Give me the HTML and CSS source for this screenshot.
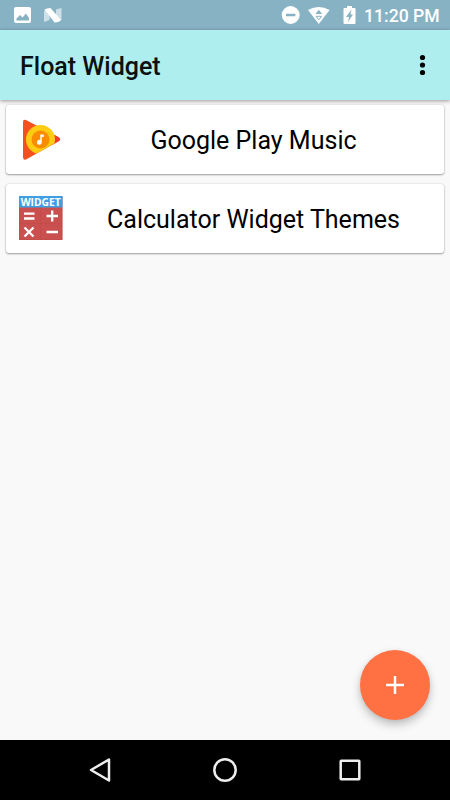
FILE: index.html
```html
<!DOCTYPE html>
<html lang="en">
<head>
<meta charset="utf-8">
<title>Float Widget</title>
<link rel="stylesheet" href="styles.css">
</head>
<body>
<div class="screen">
  <div class="status">
    <svg class="status-left" width="70" height="30" viewBox="0 0 70 30">
      <rect x="14" y="7" width="17" height="16" rx="2" fill="#fff"/>
      <path d="M16.500 20.500v-2l3.500-3.500 2.500 2.500 3.500-4 3 4.500v2.500z" fill="#86b2c4"/>
      <path d="M44 11l5.500-2v11L44 22zM56 9.500l5.500-1.500v12l-5.500 2z" fill="#fff" opacity=".6"/>
      <path d="M44.500 9.500q2-1.500 6-1.500l10.500 12q-2 2.500-6.500 2.500z" fill="#fff"/>
    </svg>
    <svg width="82" height="30" viewBox="278 0 82 30">
      <path fill="#fff" fill-rule="evenodd" d="M281.700 15a9 9 0 1 0 18 0a9 9 0 1 0-18 0zM286 13.800h9.400v2.400H286z"/>
      <path d="M308 10Q318.800 4 329.600 10L318.800 24z" fill="#fff"/>
      <path d="M315.500 14l3.300-4.200 3.300 4.200z" fill="#86b2c4"/>
      <path d="M316 16.300h5.600l-2.800 3.500z" fill="#fff" stroke="#86b2c4" stroke-width="1"/>
      <path d="M347 6h5v2h2.500q1 0 1 1v14q0 1-1 1h-10q-1 0-1-1V9q0-1 1-1h2.500z" fill="#fff"/>
      <path d="M351.500 9.500l-5.500 7.500h3l-1 5 5-7.500H350.500z" fill="#86b2c4"/>
    </svg>
    <span class="time">11:20 PM</span>
  </div>
  <header class="appbar">
    <h1>Float Widget</h1>
    <svg width="8" height="24" viewBox="0 0 8 24"><circle cx="4.500" cy="4.500" r="2.600"/><circle cx="4.500" cy="12" r="2.600"/><circle cx="4.500" cy="19.500" r="2.600"/></svg>
  </header>
  <main class="list">
    <div class="card">
      <svg width="44" height="44" viewBox="0 0 44 44">
        <defs><clipPath id="under"><path d="M0 0h44v20.500L6 42H0z"/></clipPath></defs>
        <path d="M4 4Q4 1 7 2L40 19.500Q42 21.500 40 23L7 41.500Q4 42.500 4 39z" fill="#f4511e"/>
        <path d="M32 15l8 4.500Q42 21.500 40 23l-7 4z" fill="#f43b2f"/>
        <g clip-path="url(#under)">
          <circle cx="21.500" cy="21.500" r="14.500" fill="#fdcc13"/>
          <circle cx="21.500" cy="21.500" r="9" fill="#fb8c00"/>
        </g>
        <path d="M21.300 16.500h3.500v2.600h-2v5.200a2.400 2.400 0 1 1-1.500-2.200z" fill="#fff"/>
      </svg>
      <span class="label">Google Play Music</span>
    </div>
    <div class="card">
      <svg class="calc-icon" width="44" height="44" viewBox="0 0 44 44">
        <path d="M0 0h43.500v44H0z" fill="#c9504e"/>
        <path d="M0 0h43.500v11.500H0z" fill="#3f9fe5"/>
        <path d="M0 27.500h43M21.500 11.500v32M.5 11.500v32M43 11.500v32M0 43.500h43" stroke="#b94643" stroke-opacity=".35" fill="none"/>
        <text class="widget-word" x="21.700" y="10" text-anchor="middle" textLength="40" lengthAdjust="spacingAndGlyphs">WIDGET</text>
        <path d="M5 17.700h10.500M5 22.500h10.500M27.500 20h11.500M33.200 14.500v11M5.500 31.500l9 9M14.500 31.500l-9 9M27.500 36h11.500" stroke="#fff" stroke-width="2.300" fill="none"/>
      </svg>
      <span class="label">Calculator Widget Themes</span>
    </div>
  </main>
  <button class="fab" aria-label="Add"><svg width="20" height="20" viewBox="0 0 20 20"><path d="M1 10h18M10 1v18" stroke="#fff" stroke-width="2.500"/></svg></button>
  <nav class="navbar">
    <svg width="26" height="26" viewBox="0 0 26 26"><path d="M22 2.500v21L4 13z"/></svg>
    <svg width="26" height="26" viewBox="0 0 26 26"><circle cx="13" cy="13" r="10.700"/></svg>
    <svg width="26" height="26" viewBox="0 0 26 26"><rect x="3.700" y="3.700" width="18.600" height="18.600" rx=".5"/></svg>
  </nav>
</div>
</body>
</html>
```
FILE: styles.css
```css
* { box-sizing: border-box; }
body { margin: 0; font-family: Roboto, "Liberation Sans", sans-serif; }
svg { display: block; flex: none; }
.screen {
  position: relative;
  display: flex;
  flex-direction: column;
  width: 450px;
  height: 800px;
  overflow: hidden;
  background: #f9f9f9;
}
.status {
  display: flex;
  align-items: center;
  height: 30px;
  flex: none;
  background: #86b2c4;
}
.status-left { margin-right: auto; }
.time {
  width: 86px;
  margin-left: 4px;
  font-size: 17.600px;
  font-weight: 500;
  line-height: 30px;
  padding-top: 1px;
  color: #fff;
  white-space: nowrap;
}
.appbar {
  display: flex;
  align-items: center;
  justify-content: space-between;
  height: 70px;
  flex: none;
  padding: 0 24px 0 20px;
  background: #afeeee;
  box-shadow: 0 1px 4px rgba(0, 0, 0, .4);
}
.appbar h1 {
  margin: 3px 0 0;
  font-size: 25px;
  font-weight: 500;
  line-height: 32px;
  color: #0b1010;
}
.list {
  display: flex;
  flex-direction: column;
  flex: 1;
  gap: 9.500px;
  padding: 5px 6px;
}
.card {
  display: flex;
  align-items: center;
  height: 69px;
  padding-left: 13px;
  background: #fff;
  border-radius: 3px;
  box-shadow: 0 1px 2px rgba(0, 0, 0, .35), 0 0 2px rgba(0, 0, 0, .15);
}
.calc-icon { margin-top: -1px; }
.label {
  flex: 1;
  padding: 3px 0 0;
  font-size: 25px;
  line-height: 32px;
  text-align: center;
  color: #000;
}
.widget-word { font: 700 10.500px "Open Sans", sans-serif; fill: #fff; }
.fab {
  position: absolute;
  left: 360px;
  top: 650px;
  display: flex;
  align-items: center;
  justify-content: center;
  width: 70px;
  height: 70px;
  padding: 0;
  border: 0;
  border-radius: 50%;
  background: #ff7043;
  box-shadow: 0 5px 10px rgba(0, 0, 0, .22), 0 1px 4px rgba(0, 0, 0, .08);
}
.navbar {
  display: flex;
  align-items: center;
  justify-content: space-between;
  height: 60px;
  flex: none;
  padding: 0 87px;
  background: #000;
}
.navbar svg { fill: none; stroke: #eee; stroke-width: 2.500px; stroke-linejoin: round; }
```
